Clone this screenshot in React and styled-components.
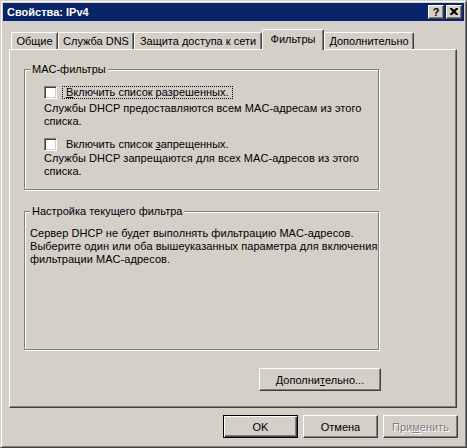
import React from "react";
import styled, { createGlobalStyle, css } from "styled-components";

const FACE = "#D4D0C8";

const Global = createGlobalStyle`
  html, body { margin: 0; padding: 0; background: ${FACE}; }
  body { font-family: "Liberation Sans", Arial, sans-serif; font-size: 11px; color: #000; }
  * { box-sizing: border-box; }
`;

const Window = styled.div`
  width: 467px;
  height: 448px;
  background: ${FACE};
  border: 1px solid;
  border-color: ${FACE} #404040 #404040 ${FACE};
  box-shadow: inset 1px 1px 0 #fff, inset -1px -1px 0 #808080;
  padding: 2px;
  display: flex;
  flex-direction: column;
`;

const TitleBar = styled.div`
  height: 18px;
  flex: none;
  background: #0a246a;
  display: flex;
  align-items: center;
  padding: 0 2px 0 2px;
`;

const Title = styled.div`
  flex: 1;
  color: #fff;
  font-weight: bold;
  font-size: 11px;
  padding-left: 2px;
  line-height: 18px;
`;

const CaptionButtons = styled.div`
  display: flex;
  gap: 2px;
`;

const CaptionButton = styled.div`
  width: 16px;
  height: 14px;
  background: ${FACE};
  border: 1px solid;
  border-color: #fff #404040 #404040 #fff;
  box-shadow: inset -1px -1px 0 #808080;
  display: flex;
  align-items: center;
  justify-content: center;
  font-weight: bold;
  font-size: 11px;
  line-height: 12px;
  padding-bottom: 1px;
`;

const Body = styled.div`
  flex: 1;
  display: flex;
  flex-direction: column;
  padding: 8px 7px 0 6px;
`;

const TabStrip = styled.div`
  display: flex;
  align-items: flex-end;
  height: 20px;
  padding-left: 2px;
  position: relative;
  z-index: 1;
`;

const Tab = styled.div`
  flex: none;
  width: ${(p) => p.$w}px;
  height: ${(p) => (p.$active ? 21 : 17)}px;
  margin-bottom: ${(p) => (p.$active ? -1 : 0)}px;
  background: ${FACE};
  border-top: 1px solid #fff;
  border-left: 1px solid #fff;
  border-right: 1px solid #404040;
  border-radius: 2px 2px 0 0;
  box-shadow: inset -1px 0 0 #808080;
  display: flex;
  align-items: center;
  justify-content: center;
  padding-bottom: ${(p) => (p.$active ? 2 : 0)}px;
  white-space: nowrap;
`;

const Panel = styled.div`
  width: 448px;
  height: 359px;
  border: 1px solid;
  border-color: #fff #404040 #404040 #fff;
  box-shadow: inset -1px -1px 0 #808080;
  padding: 19px 0 0 14px;
  display: flex;
  flex-direction: column;
`;

const GroupBox = styled.div`
  position: relative;
  width: 355px;
  height: ${(p) => p.$h}px;
  flex: none;
  border: 1px solid #808080;
  box-shadow: inset 1px 1px 0 #fff, 1px 1px 0 #fff;
  margin-top: ${(p) => p.$mt || 0}px;
  padding: ${(p) => p.$pad};
`;

const Legend = styled.div`
  position: absolute;
  top: -7px;
  left: 5px;
  padding: 0 2px;
  background: ${FACE};
  line-height: 13px;
  white-space: nowrap;
`;

const CheckRow = styled.div`
  display: flex;
  align-items: center;
  height: 13px;
  margin-top: ${(p) => p.$mt || 0}px;
`;

const CheckBox = styled.div`
  width: 13px;
  height: 13px;
  flex: none;
  background: #fff;
  border: 1px solid;
  border-color: #808080 #fff #fff #808080;
  box-shadow: inset 1px 1px 0 #404040, inset -1px -1px 0 ${FACE};
  margin-right: 5px;
`;

const CheckLabel = styled.div`
  height: 13px;
  line-height: 11px;
  padding: 0 3px;
  border: 1px dotted ${(p) => (p.$focus ? "#000" : "transparent")};
  white-space: nowrap;
`;

const Text = styled.div`
  line-height: 13px;
  margin-top: ${(p) => p.$mt || 0}px;
  white-space: nowrap;
  letter-spacing: 0.05px;
`;

const RightRow = styled.div`
  display: flex;
  justify-content: flex-end;
  width: ${(p) => p.$w}px;
  margin-top: ${(p) => p.$mt || 0}px;
  gap: ${(p) => p.$gap || 0}px;
`;

const Button = styled.div`
  width: ${(p) => p.$w || 75}px;
  height: 23px;
  flex: none;
  background: ${FACE};
  border: 1px solid;
  border-color: #fff #404040 #404040 #fff;
  box-shadow: inset -1px -1px 0 #808080;
  display: flex;
  align-items: center;
  justify-content: center;
  white-space: nowrap;
  ${(p) =>
    p.$default &&
    css`
      border-color: #000;
      box-shadow: inset 1px 1px 0 #fff, inset -1px -1px 0 #404040,
        inset -2px -2px 0 #808080;
    `}
  ${(p) =>
    p.$disabled &&
    css`
      color: #808080;
      text-shadow: 1px 1px 0 #fff;
    `}
`;

const Key = styled.u`
  text-decoration: underline;
  text-underline-offset: 1px;
`;

const CloseGlyph = () => (
  <svg width="8" height="7" viewBox="0 0 8 7">
    <path d="M0 0h2l2 2l2-2h2v1l-2.5 2.5l2.5 2.5v1h-2l-2-2l-2 2h-2v-1l2.5-2.5l-2.5-2.5z" fill="#000" />
  </svg>
);

const tabs = [
  { label: "Общие", w: 47 },
  { label: "Служба DNS", w: 76 },
  { label: "Защита доступа к сети", w: 128 },
  { label: "Фильтры", w: 62, active: true },
  { label: "Дополнительно", w: 90 },
];

export default function App() {
  return (
    <>
      <Global />
      <Window>
        <TitleBar>
          <Title>Свойства: IPv4</Title>
          <CaptionButtons>
            <CaptionButton>?</CaptionButton>
            <CaptionButton>
              <CloseGlyph />
            </CaptionButton>
          </CaptionButtons>
        </TitleBar>
        <Body>
          <TabStrip>
            {tabs.map((t) => (
              <Tab key={t.label} $w={t.w} $active={t.active}>
                {t.label}
              </Tab>
            ))}
          </TabStrip>
          <Panel>
            <GroupBox $h={121} $pad="16px 0 0 19px">
              <Legend>MAC-фильтры</Legend>
              <CheckRow>
                <CheckBox />
                <CheckLabel $focus>
                  <Key>В</Key>ключить список разрешенных.
                </CheckLabel>
              </CheckRow>
              <Text $mt={3}>
                Службы DHCP предоставляются всем MAC-адресам из этого
                <br />
                списка.
              </Text>
              <CheckRow $mt={10}>
                <CheckBox />
                <CheckLabel>
                  Включить список <Key>з</Key>апрещенных.
                </CheckLabel>
              </CheckRow>
              <Text $mt={1}>
                Службы DHCP запрещаются для всех MAC-адресов из этого
                <br />
                списка.
              </Text>
            </GroupBox>
            <GroupBox $h={139} $mt={21} $pad="15px 0 0 5px">
              <Legend>Настройка текущего фильтра</Legend>
              <Text>
                Сервер DHCP не будет выполнять фильтрацию MAC-адресов.
                <br />
                Выберите один или оба вышеуказанных параметра для включения
                <br />
                фильтрации MAC-адресов.
              </Text>
            </GroupBox>
            <RightRow $w={357} $mt={18}>
              <Button $w={122}>
                Дополни<Key>т</Key>ельно...
              </Button>
            </RightRow>
          </Panel>
          <RightRow $w={449} $mt={7} $gap={5}>
            <Button $default>OK</Button>
            <Button>Отмена</Button>
            <Button $disabled>
              При<Key>м</Key>енить
            </Button>
          </RightRow>
        </Body>
      </Window>
    </>
  );
}
